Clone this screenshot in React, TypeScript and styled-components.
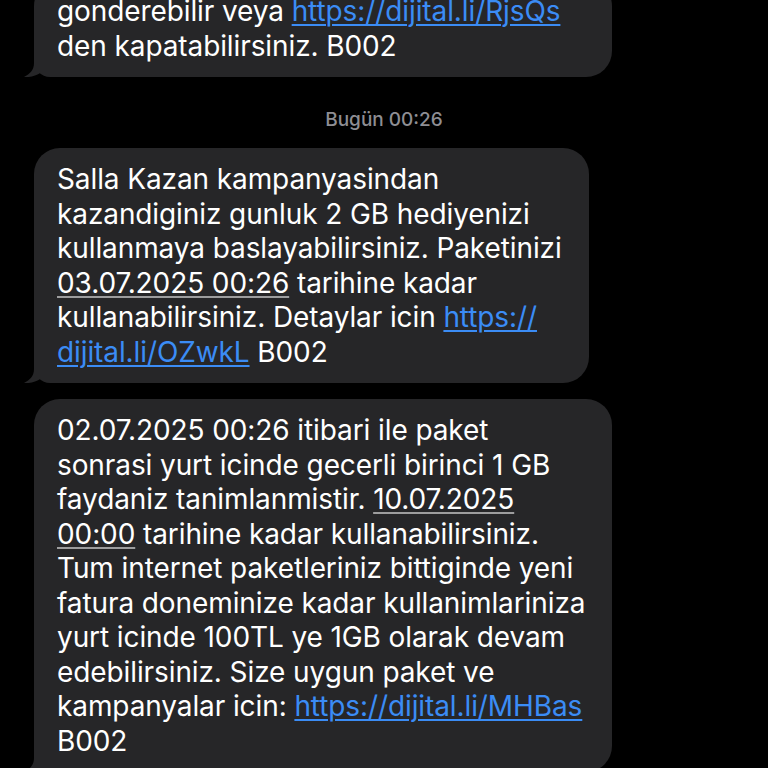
import React from 'react';
import styled, { createGlobalStyle } from 'styled-components';

const GlobalStyle = createGlobalStyle`
  html, body {
    margin: 0;
    padding: 0;
    background: #000;
    overflow: hidden;
  }

  body {
    font-family: Inter, 'Liberation Sans', sans-serif;
    -webkit-font-smoothing: antialiased;
  }

  #root {
    height: 768px;
    overflow: hidden;
  }
`;

// the thread is scrolled a little, so the first bubble starts above the top edge
const Thread = styled.div`
  display: flex;
  flex-direction: column;
  align-items: flex-start;
  margin-top: -20px;
`;

const Bubble = styled.div<{ $gap?: number; $minWidth?: number }>`
  position: relative;
  box-sizing: border-box;
  min-width: ${({ $minWidth }) => ($minWidth ? `${$minWidth}px` : 'auto')};
  margin-left: 34px;
  margin-top: ${({ $gap }) => $gap ?? 0}px;
  padding: 14px 27px 14px 23px;
  background: #262628;
  border-radius: 26px 26px 26px 16px;
  color: #fff;
  font-size: 28px;
  line-height: 34.5px;
  letter-spacing: -0.1px;
`;

const Line = styled.div`
  white-space: nowrap;
`;

const Link = styled.a`
  color: #3b8cf5;
  text-decoration: underline;
  text-decoration-thickness: 1.5px;
  text-underline-offset: 3px;
`;

const DateText = styled.span`
  text-decoration: underline;
  text-decoration-color: rgba(255, 255, 255, 0.55);
  text-decoration-thickness: 1.5px;
  text-underline-offset: 3px;
`;

const Stamp = styled.div`
  align-self: center;
  margin: 31px 0 16px;
  color: #8e8e93;
  font-size: 19px;
  font-weight: 500;
  line-height: 24px;
`;

const TailSvg = styled.svg`
  position: absolute;
  left: -10px;
  bottom: 0;
  width: 26px;
  height: 24px;
`;

function Tail () {
  return (
    <TailSvg viewBox='0 0 26 24'>
      <path
        d='M10 0 L10 10 C10 17 6 21 0 24 C6 24.5 12 23 17 19.5 L17 0 Z'
        fill='#262628'
      />
    </TailSvg>
  );
}

export default function App (): React.ReactElement {
  return (
    <>
      <GlobalStyle />
      <Thread>
        {/* wider line of this message is scrolled out of view */}
        <Bubble $minWidth={578}>
          <Line>gonderebilir veya <Link href='#'>https://dijital.li/RjsQs</Link></Line>
          <Line>den kapatabilirsiniz. B002</Line>
          <Tail />
        </Bubble>

        <Stamp>Bugün 00:26</Stamp>

        <Bubble>
          <Line>Salla Kazan kampanyasindan</Line>
          <Line>kazandiginiz gunluk 2 GB hediyenizi</Line>
          <Line>kullanmaya baslayabilirsiniz. Paketinizi</Line>
          <Line><DateText>03.07.2025 00:26</DateText> tarihine kadar</Line>
          <Line>kullanabilirsiniz. Detaylar icin <Link href='#'>https://</Link></Line>
          <Line><Link href='#'>dijital.li/OZwkL</Link> B002</Line>
          <Tail />
        </Bubble>

        <Bubble $gap={16}>
          <Line>02.07.2025 00:26 itibari ile paket</Line>
          <Line>sonrasi yurt icinde gecerli birinci 1 GB</Line>
          <Line>faydaniz tanimlanmistir. <DateText>10.07.2025</DateText></Line>
          <Line><DateText>00:00</DateText> tarihine kadar kullanabilirsiniz.</Line>
          <Line>Tum internet paketleriniz bittiginde yeni</Line>
          <Line>fatura doneminize kadar kullanimlariniza</Line>
          <Line>yurt icinde 100TL ye 1GB olarak devam</Line>
          <Line>edebilirsiniz. Size uygun paket ve</Line>
          <Line>kampanyalar icin: <Link href='#'>https://dijital.li/MHBas</Link></Line>
          <Line>B002</Line>
          <Tail />
        </Bubble>
      </Thread>
    </>
  );
}
